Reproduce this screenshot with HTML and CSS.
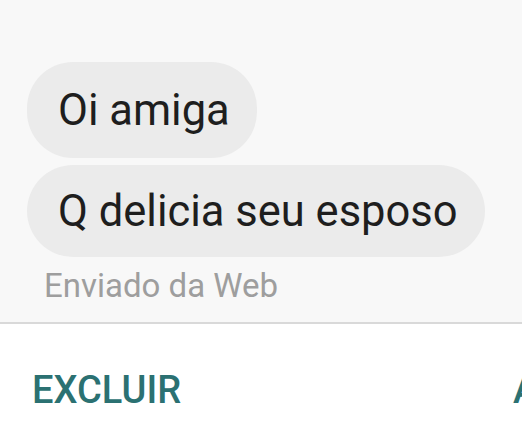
FILE: index.html
```html
<!DOCTYPE html>
<html lang="pt">
<head>
<meta charset="utf-8">
<link rel="stylesheet" href="styles.css">
</head>
<body>
<div class="screen">
  <section class="chat">
    <div class="bubble b1">Oi amiga</div>
    <div class="bubble b2">Q delicia seu esposo</div>
    <div class="meta">Enviado da Web</div>
  </section>
  <footer class="actions">
    <span class="btn">EXCLUIR</span>
    <span class="btn second">ARQUIVAR</span>
  </footer>
</div>
</body>
</html>
```
FILE: styles.css
```css
html, body {
  margin: 0;
  padding: 0;
  width: 522px;
  height: 445px;
  overflow: hidden;
  background: #ffffff;
  font-family: Roboto, "Noto Sans", sans-serif;
}
.screen {
  width: 522px;
  height: 445px;
  display: flex;
  flex-direction: column;
}
.chat {
  background: #f8f8f8;
  padding: 62px 0 0 27px;
  height: 324px;
  flex-shrink: 0;
  box-sizing: border-box;
  border-bottom: 2px solid #d9d9d9;
  display: flex;
  flex-direction: column;
  align-items: flex-start;
}
.bubble {
  flex-shrink: 0;
  background: #ebebeb;
  color: #1e1e1e;
  font-size: 43.5px;
  display: flex;
  align-items: center;
  padding: 0 27px 0 31px;
  border-radius: 46px;
}
.b1 { height: 96px; }
.b2 { height: 92px; margin-top: 7px; }
.meta {
  margin-top: 9px;
  margin-left: 17px;
  font-size: 33px;
  color: #9e9e9e;
  line-height: 40px;
}
.actions {
  display: flex;
  gap: 332px;
  padding: 44px 0 0 32px;
  white-space: nowrap;
}
.btn {
  font-size: 38px;
  font-weight: 500;
  color: #2b7172;
  line-height: 44px;
}
```
